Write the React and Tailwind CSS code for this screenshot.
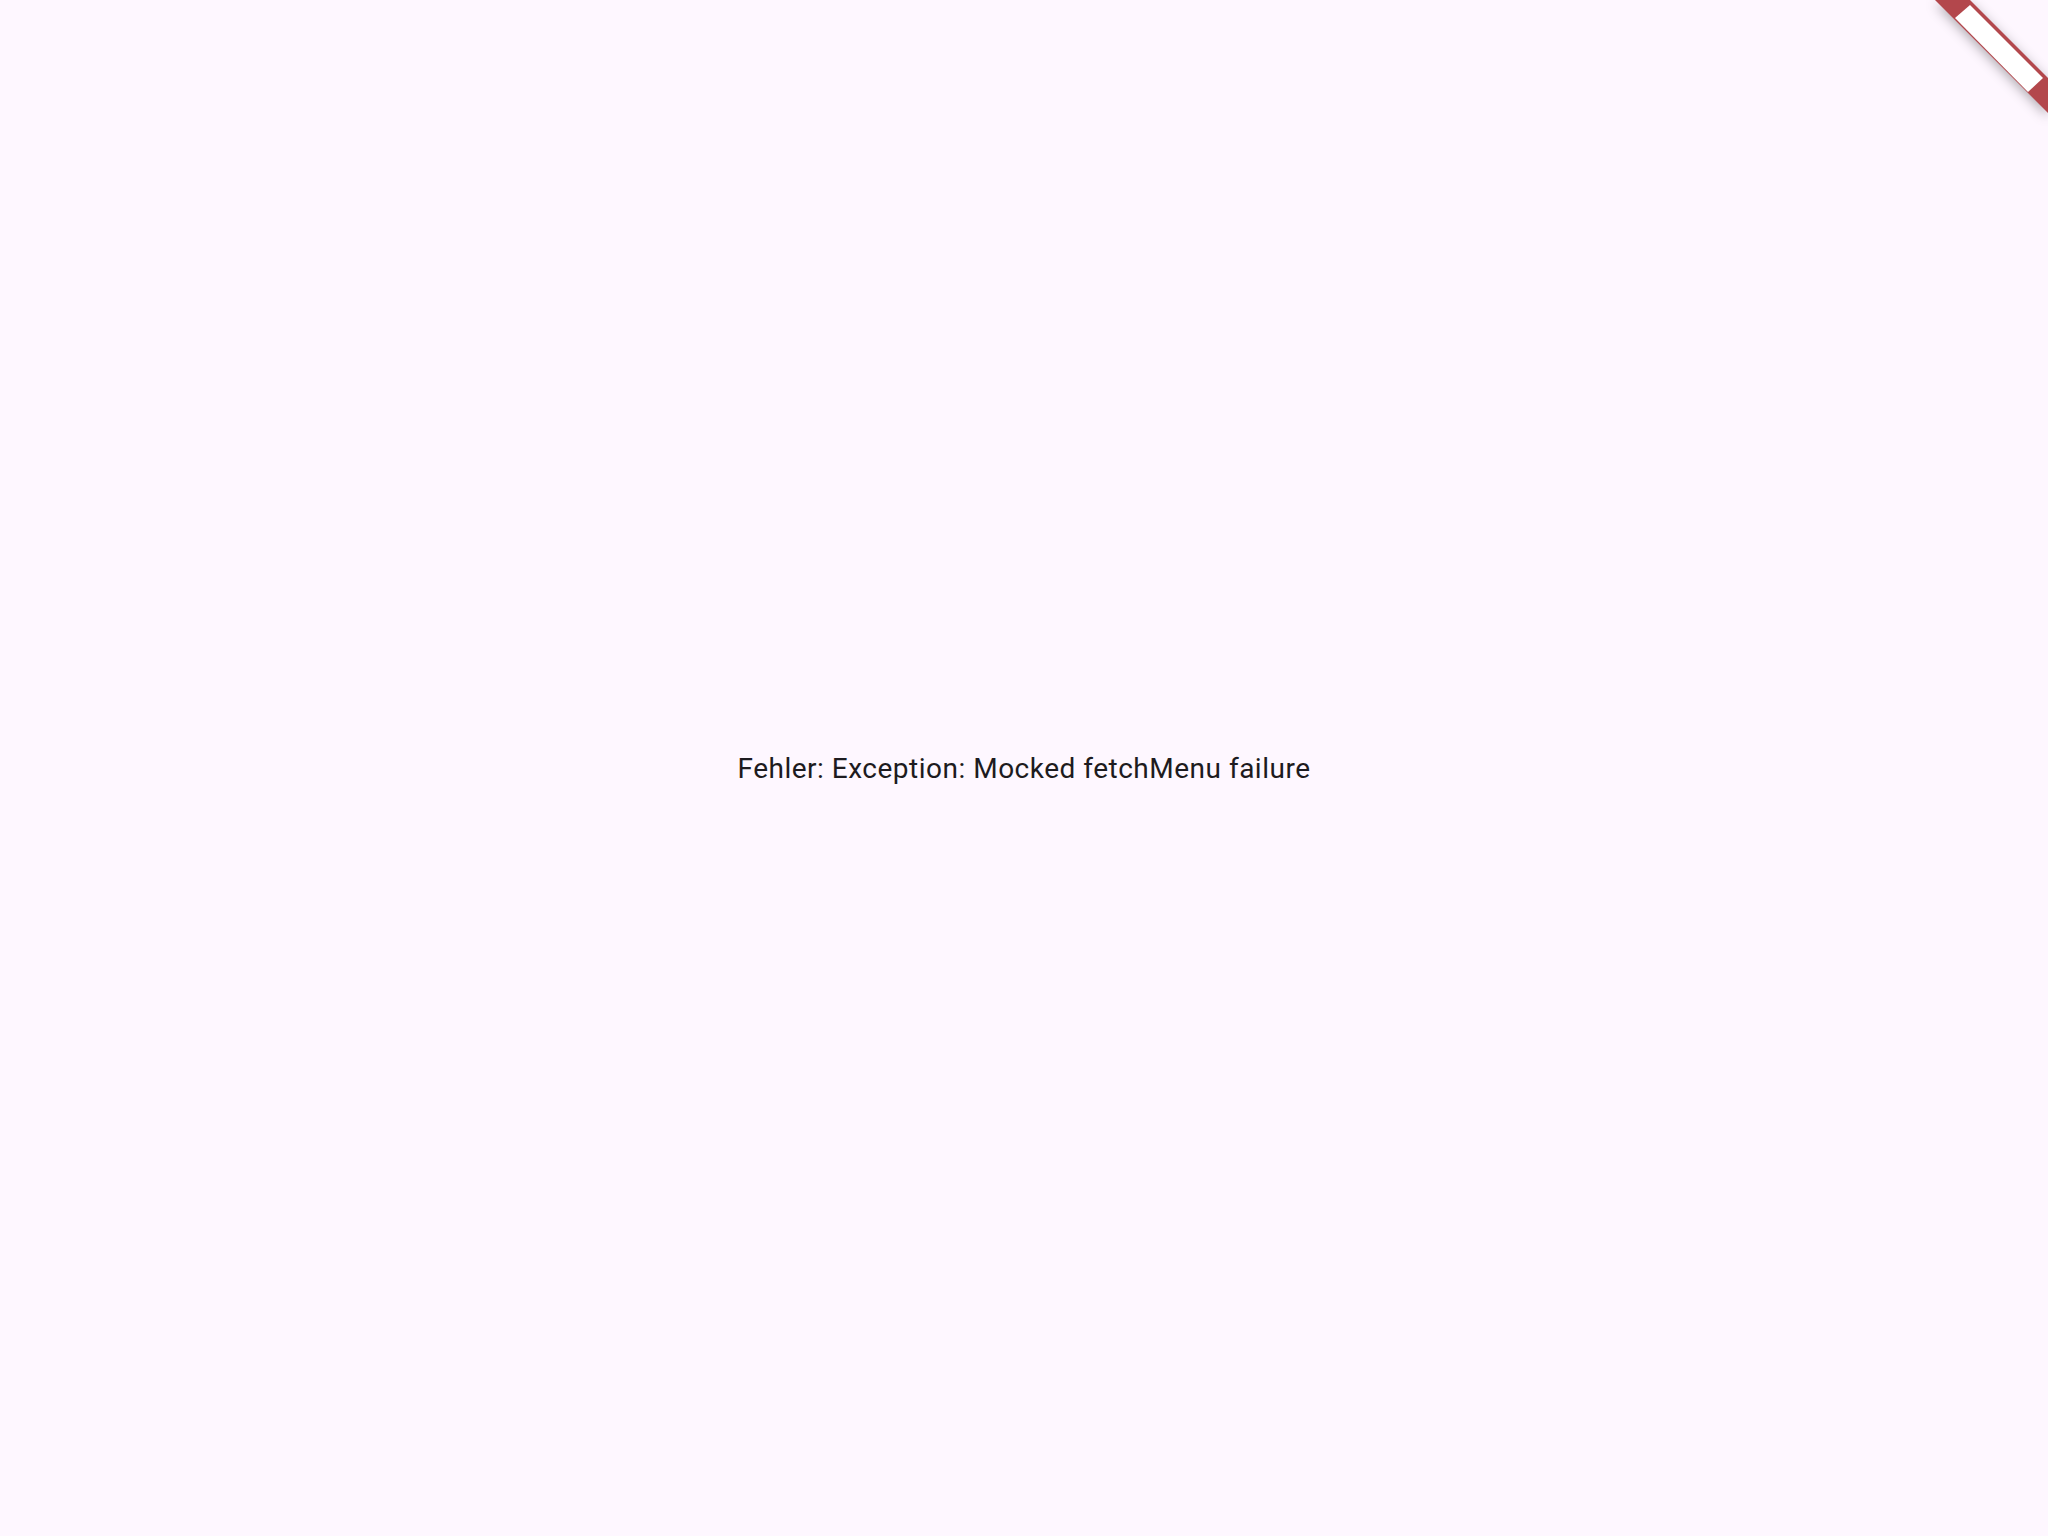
import React from 'react';

const DebugBanner = () => (
  <svg
    className="absolute top-0 right-0 drop-shadow-[0_4px_6px_rgba(0,0,0,0.3)]"
    width="148"
    height="148"
    viewBox="0 0 148 148"
  >
    <polygon points="35,0 70,0 148,78 148,113" fill="#b3474c" />
    <polygon points="55,18 70,5 143,78 128,92" fill="#ffffff" />
  </svg>
);

const App = () => {
  return (
    <div className="relative w-full h-screen overflow-hidden bg-[#fef7ff] flex items-center justify-center">
      {/* Error message */}
      <p className="text-[28px] leading-[40px] tracking-[0.5px] text-[#1d1b20] font-['Roboto',sans-serif] mt-[2px]">
        Fehler: Exception: Mocked fetchMenu failure
      </p>

      {/* Flutter debug banner */}
      <DebugBanner />
    </div>
  );
};

export default App;
